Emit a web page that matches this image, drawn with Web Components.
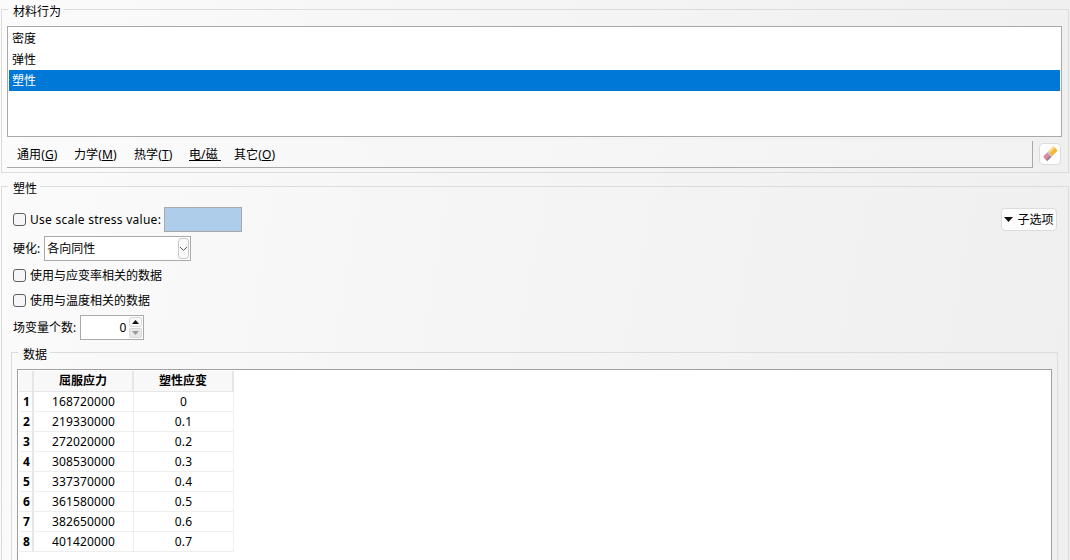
<!DOCTYPE html>
<html lang="zh">
<head>
<meta charset="utf-8">
<title>材料行为</title>
<style>
    html, body {
        margin: 0;
        height: 560px;
        overflow: hidden;
    }
    body {
        font: 12px/16px "Noto Sans", "Noto Sans CJK SC", sans-serif;
        color: #000;
        background: linear-gradient(100deg, #fbfbfb 0%, #f5f5f5 45%, #efefef 100%);
    }
    material-editor {
        display: block;
    }
</style>
</head>
<body>
<material-editor></material-editor>

<script>
class GroupBox extends HTMLElement {
    constructor() {
        super();
        this.attachShadow({ mode: 'open' });
        this.shadowRoot.innerHTML = `
            <style>
                :host { display: block; }
                fieldset {
                    margin: 0;
                    min-width: 0;
                    border: 1px solid #dcdcdc;
                    padding: var(--pad, 8px 6px 4px 5px);
                }
                legend {
                    box-sizing: border-box;
                    height: 18px;
                    margin-left: var(--legend-x, 1px);
                    padding: 4px 3px 0 5px;
                    line-height: 16px;
                }
            </style>
            <fieldset>
                <legend>${this.getAttribute('label')}</legend>
                <slot></slot>
            </fieldset>
        `;
    }
}

class BehaviorList extends HTMLElement {
    constructor() {
        super();
        this.attachShadow({ mode: 'open' });
        this.shadowRoot.innerHTML = `
            <style>
                :host {
                    display: block;
                    height: 107px;
                    padding: 1px;
                    border: 1px solid #a9a9a9;
                    background: #fff;
                }
                div {
                    height: 21px;
                    line-height: 21px;
                    padding-left: 3px;
                }
                .sel {
                    background: #0078d7;
                    color: #fff;
                }
            </style>
            <div>密度</div>
            <div>弹性</div>
            <div class="sel">塑性</div>
        `;
    }
}

class MenuBar extends HTMLElement {
    constructor() {
        super();
        this.attachShadow({ mode: 'open' });
        this.shadowRoot.innerHTML = `
            <style>
                :host {
                    display: flex;
                    flex: 1;
                    align-items: center;
                    box-sizing: border-box;
                    height: 27px;
                    padding: 2px 0 0 10px;
                    border-right: 1px solid #a9a9a9;
                    border-bottom: 1px solid #a9a9a9;
                    background: rgba(255, 255, 255, 0.2);
                }
                span {
                    white-space: pre;
                    letter-spacing: 0.1px;
                }
            </style>
            <span style="width:57px">通用(<u>G</u>)</span>
            <span style="width:60px">力学(<u>M</u>)</span>
            <span style="width:55px">热学(<u>T</u>)</span>
            <span style="width:45px"><u>电/磁 </u></span>
            <span>其它(<u>O</u>)</span>
        `;
    }
}

class ToolButton extends HTMLElement {
    constructor() {
        super();
        this.attachShadow({ mode: 'open' });
        this.shadowRoot.innerHTML = `
            <style>
                :host {
                    display: inline-flex;
                    align-items: center;
                    justify-content: center;
                    box-sizing: border-box;
                    gap: 4px;
                    border: 1px solid #dcdcdc;
                    border-radius: 4px;
                    background: #fdfdfd;
                }
            </style>
            <slot></slot>
        `;
    }
}

class CheckField extends HTMLElement {
    constructor() {
        super();
        this.attachShadow({ mode: 'open' });
        this.shadowRoot.innerHTML = `
            <style>
                :host {
                    display: flex;
                    align-items: center;
                    height: 21px;
                    margin-left: 2px;
                }
                i {
                    box-sizing: border-box;
                    width: 13px;
                    height: 13px;
                    margin-right: 4px;
                    border: 1px solid #5f5f5f;
                    border-radius: 3px;
                    background: #f6f6f6;
                }
            </style>
            <i></i><slot></slot>
        `;
    }
}

class ComboField extends HTMLElement {
    constructor() {
        super();
        this.attachShadow({ mode: 'open' });
        this.shadowRoot.innerHTML = `
            <style>
                :host {
                    display: flex;
                    align-items: center;
                    justify-content: space-between;
                    box-sizing: border-box;
                    width: 147px;
                    height: 25px;
                    margin-left: 1px;
                    padding: 0 1px 0 2px;
                    border: 1px solid #a9a9a9;
                    background: #fff;
                }
                b {
                    display: flex;
                    align-items: center;
                    justify-content: center;
                    box-sizing: border-box;
                    width: 11px;
                    height: 21px;
                    border: 1px solid #c8c8c8;
                    border-radius: 3px;
                    background: #fafafa;
                }
            </style>
            <slot></slot>
            <b><svg width="9" height="6" viewBox="0 0 9 6"><path d="M1 1l3.5 3.5L8 1" fill="none" stroke="#555"/></svg></b>
        `;
    }
}

class SpinField extends HTMLElement {
    constructor() {
        super();
        this.attachShadow({ mode: 'open' });
        this.shadowRoot.innerHTML = `
            <style>
                :host {
                    display: flex;
                    align-items: center;
                    box-sizing: border-box;
                    width: 64px;
                    height: 25px;
                    margin-left: 1px;
                    padding-right: 1px;
                    border: 1px solid #a9a9a9;
                    background: #fff;
                }
                span {
                    flex: 1;
                    text-align: right;
                    padding-right: 3px;
                }
                div {
                    display: grid;
                    gap: 1px;
                }
                b {
                    display: flex;
                    align-items: center;
                    justify-content: center;
                    width: 13px;
                    height: 10px;
                    border: 1px solid #d8d8d8;
                    box-sizing: border-box;
                    border-radius: 2px;
                    background: #f8f8f8;
                }
                b + b { background: #e8e8e8; }
            </style>
            <span><slot></slot></span>
            <div>
                <b><svg width="7" height="4" viewBox="0 0 7 4"><path d="M3.5 0L7 4H0z" fill="#111"/></svg></b>
                <b><svg width="7" height="4" viewBox="0 0 7 4"><path d="M0 0h7L3.5 4z" fill="#999"/></svg></b>
            </div>
        `;
    }
}

class DataTable extends HTMLElement {
    constructor() {
        super();
        this.attachShadow({ mode: 'open' });
        // stress, plastic strain
        const rows = [
            ['168720000', '0'],
            ['219330000', '0.1'],
            ['272020000', '0.2'],
            ['308530000', '0.3'],
            ['337370000', '0.4'],
            ['361580000', '0.5'],
            ['382650000', '0.6'],
            ['401420000', '0.7']
        ];
        const body = rows.map((r, i) => `
            <div class="num">${i + 1}</div>
            <div class="cell">${r[0]}</div>
            <div class="cell">${r[1]}</div>
        `).join('');
        this.shadowRoot.innerHTML = `
            <style>
                :host {
                    display: block;
                    height: 220px;
                    padding: 1px;
                    border: 1px solid #a0a0a0;
                    background: #fff;
                }
                .grid {
                    display: grid;
                    grid-template-columns: 15px 100px 100px;
                    grid-template-rows: 21px repeat(8, 20px);
                    width: max-content;
                }
                .grid div {
                    box-sizing: border-box;
                    line-height: 19px;
                    text-align: center;
                }
                .head {
                    font-weight: 700;
                    background: #f8f8f8;
                    border-right: 2px solid #e6e6e6;
                    border-bottom: 1px solid #e6e6e6;
                }
                .num {
                    padding-left: 2px;
                    font-weight: 700;
                    border-right: 2px solid #e6e6e6;
                    border-bottom: 1px solid #eee;
                }
                .cell {
                    letter-spacing: 0.15px;
                    border-right: 1px solid #eee;
                    border-bottom: 1px solid #eee;
                }
            </style>
            <div class="grid">
                <div class="head"></div>
                <div class="head">屈服应力</div>
                <div class="head">塑性应变</div>
                ${body}
            </div>
        `;
    }
}

class MaterialEditor extends HTMLElement {
    constructor() {
        super();
        this.attachShadow({ mode: 'open' });
        this.shadowRoot.innerHTML = `
            <style>
                :host {
                    display: block;
                    padding: 0 1px;
                }
                .tabs {
                    display: flex;
                    gap: 6px;
                    margin: 4px 0 0;
                }
                .eraser {
                    width: 22px;
                    height: 22px;
                    margin: 2px 1px 0 0;
                }
                .plastic {
                    display: block;
                    margin-top: 4px;
                    --pad: 12px 10px 0 9px;
                    --legend-x: -3px;
                }
                .form {
                    display: grid;
                    gap: 4px;
                }
                .row {
                    display: flex;
                    align-items: center;
                    margin-left: 2px;
                    height: 25px;
                }
                .row check-field { margin-left: 0; margin-right: 3px; }
                .scale-label { letter-spacing: 0.26px; }
                .scale {
                    box-sizing: border-box;
                    width: 78px;
                    height: 25px;
                    border: 1px solid #a9a9a9;
                    background: #aecdeb;
                }
                .sub {
                    width: 56px;
                    height: 23px;
                    margin: 0 1px 0 auto;
                }
                .data {
                    margin-top: 3px;
                    --pad: 8px 5px 0;
                    --legend-x: 1px;
                }
            </style>
            <group-box label="材料行为">
                <behavior-list></behavior-list>
                <div class="tabs">
                    <menu-bar></menu-bar>
                    <tool-button class="eraser">
                        <svg width="16" height="16" viewBox="0 0 16 16">
                            <g transform="rotate(45 8 8)">
                                <rect x="5" y="0" width="6" height="8" rx="1" fill="#f2b63c"/>
                                <rect x="5" y="0" width="2" height="8" fill="#f8dc90"/>
                                <rect x="5" y="7.5" width="6" height="1.5" fill="#c4c4d0"/>
                                <path d="M5 9h6v4.5a1.5 1.5 0 0 1-1.5 1.5h-3A1.5 1.5 0 0 1 5 13.5z" fill="#d98a9e"/>
                                <rect x="9.5" y="9" width="1.5" height="6" rx=".7" fill="#8c7a86"/>
                            </g>
                        </svg>
                    </tool-button>
                </div>
            </group-box>
            <group-box class="plastic" label="塑性">
                <div class="form">
                    <div class="row">
                        <check-field><span class="scale-label">Use scale stress value:</span></check-field>
                        <div class="scale"></div>
                        <tool-button class="sub">
                            <svg width="9" height="5" viewBox="0 0 9 5"><path d="M0 0h9L4.5 5z" fill="#111"/></svg>
                            子选项
                        </tool-button>
                    </div>
                    <div class="row">硬化:&nbsp;<combo-field>各向同性</combo-field></div>
                    <check-field>使用与应变率相关的数据</check-field>
                    <check-field>使用与温度相关的数据</check-field>
                    <div class="row">场变量个数:&nbsp;<spin-field>0</spin-field></div>
                </div>
                <group-box class="data" label="数据">
                    <data-table></data-table>
                </group-box>
            </group-box>
        `;
    }
}

customElements.define('group-box', GroupBox);
customElements.define('behavior-list', BehaviorList);
customElements.define('menu-bar', MenuBar);
customElements.define('tool-button', ToolButton);
customElements.define('check-field', CheckField);
customElements.define('combo-field', ComboField);
customElements.define('spin-field', SpinField);
customElements.define('data-table', DataTable);
customElements.define('material-editor', MaterialEditor);
</script>
</body>
</html>
